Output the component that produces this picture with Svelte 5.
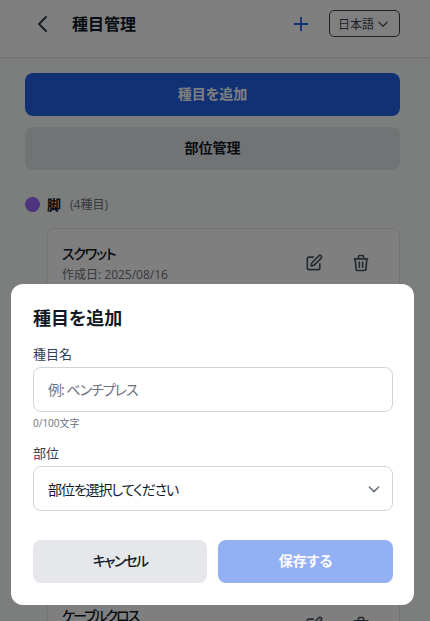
<script lang="ts">
	let name = $state('');
</script>

<div class="page">
	<header class="header">
		<div class="header__left">
			<button class="icon-btn back" aria-label="戻る">
				<svg width="24" height="24" viewBox="0 0 24 24" fill="none" stroke="currentColor" stroke-width="2" stroke-linecap="round" stroke-linejoin="round"><path d="M16 19l-7-7 7-7" /></svg>
			</button>
			<h1>種目管理</h1>
		</div>
		<div class="header__right">
			<button class="icon-btn plus" aria-label="追加">
				<svg width="22" height="22" viewBox="0 0 24 24" fill="none" stroke="currentColor" stroke-width="2" stroke-linecap="round" stroke-linejoin="round"><path d="M12 5v14M5 12h14" /></svg>
			</button>
			<div class="lang">
				<span>日本語</span>
				<svg width="14" height="14" viewBox="0 0 24 24" fill="none" stroke="currentColor" stroke-width="2" stroke-linecap="round" stroke-linejoin="round"><path d="M5 9l7 7 7-7" /></svg>
			</div>
		</div>
	</header>

	<main class="content">
		<button class="btn btn--primary">種目を追加</button>
		<button class="btn btn--secondary">部位管理</button>

		<section class="group">
			<div class="group__title">
				<span class="dot"></span>
				<h2>脚</h2>
				<span class="count">(4種目)</span>
			</div>
			<div class="card">
				<div class="card__text">
					<div class="card__name">スクワット</div>
					<div class="card__date">作成日: 2025/08/16</div>
				</div>
				<div class="card__actions">
					<svg width="20" height="20" viewBox="0 0 24 24" fill="none" stroke="currentColor" stroke-width="2" stroke-linecap="round" stroke-linejoin="round"><path d="M11 5H6a2 2 0 0 0-2 2v11a2 2 0 0 0 2 2h11a2 2 0 0 0 2-2v-5" /><path d="M17.6 3.6a2 2 0 1 1 2.8 2.8L12 14.8l-3.5.7.7-3.5 8.4-8.4z" /></svg>
					<svg width="20" height="20" viewBox="0 0 24 24" fill="none" stroke="currentColor" stroke-width="2" stroke-linecap="round" stroke-linejoin="round"><path d="M4 7h16M10 11v6M14 11v6M5 7l1 12a2 2 0 0 0 2 2h8a2 2 0 0 0 2-2l1-12M9 7V4a1 1 0 0 1 1-1h4a1 1 0 0 1 1 1v3" /></svg>
				</div>
			</div>
			<div class="card card--far">
				<div class="card__text">
					<div class="card__name card__name--long">ケーブルクロス</div>
					<div class="card__date">作成日: 2025/08/16</div>
				</div>
				<div class="card__actions">
					<svg width="20" height="20" viewBox="0 0 24 24" fill="none" stroke="currentColor" stroke-width="2" stroke-linecap="round" stroke-linejoin="round"><path d="M11 5H6a2 2 0 0 0-2 2v11a2 2 0 0 0 2 2h11a2 2 0 0 0 2-2v-5" /><path d="M17.6 3.6a2 2 0 1 1 2.8 2.8L12 14.8l-3.5.7.7-3.5 8.4-8.4z" /></svg>
					<svg width="20" height="20" viewBox="0 0 24 24" fill="none" stroke="currentColor" stroke-width="2" stroke-linecap="round" stroke-linejoin="round"><path d="M4 7h16M10 11v6M14 11v6M5 7l1 12a2 2 0 0 0 2 2h8a2 2 0 0 0 2-2l1-12M9 7V4a1 1 0 0 1 1-1h4a1 1 0 0 1 1 1v3" /></svg>
				</div>
			</div>
		</section>
	</main>

	<div class="overlay">
		<div class="modal">
			<h3>種目を追加</h3>
			<label class="label" for="name">種目名</label>
			<input id="name" class="field" placeholder="例: ベンチプレス" bind:value={name} />
			<p class="hint">{name.length}/100文字</p>
			<label class="label label--second" for="part">部位</label>
			<div class="field select" id="part">
				<span>部位を選択してください</span>
				<svg width="16" height="16" viewBox="0 0 24 24" fill="none" stroke="currentColor" stroke-width="2.4" stroke-linecap="round" stroke-linejoin="round"><path d="M5 9l7 7 7-7" /></svg>
			</div>
			<div class="modal__actions">
				<button class="btn btn--cancel">キャンセル</button>
				<button class="btn btn--save">保存する</button>
			</div>
		</div>
	</div>
</div>

<style>
	:global(body) {
		margin: 0;
		font-family: 'Open Sans', 'Noto Sans CJK JP', sans-serif;
		font-feature-settings: 'palt';
		color: #111827;
		background: #f9fafb;
	}

	.page {
		position: relative;
		width: 430px;
		height: 621px;
		overflow: hidden;
		background: #f9fafb;
	}

	button {
		font-family: inherit;
		font-feature-settings: inherit;
		border: none;
		background: none;
		padding: 0;
	}

	.header {
		display: flex;
		justify-content: space-between;
		align-items: center;
		height: 47px;
		padding: 0 30px 10px 30px;
		background: #fff;
		border-bottom: 1px solid #e5e7eb;
		box-shadow: 0 1px 2px rgba(0, 0, 0, 0.05);
	}

	.header__left,
	.header__right {
		display: flex;
		align-items: center;
	}

	.icon-btn {
		display: flex;
		color: #374151;
	}

	.plus {
		color: #2563eb;
		margin-right: 17px;
	}

	h1 {
		margin: 0 0 0 18px;
		font-size: 16px;
		font-weight: 700;
		line-height: 24px;
	}

	.lang {
		display: flex;
		align-items: center;
		gap: 2px;
		height: 27px;
		box-sizing: border-box;
		padding: 0 9px 0 8px;
		border: 1px solid #374151;
		border-radius: 5px;
		font-size: 12px;
		color: #374151;
	}

	.content {
		padding: 15px 30px 0 25px;
	}

	.btn {
		display: block;
		width: 100%;
		height: 43px;
		padding-bottom: 3px;
		border-radius: 8px;
		font-size: 14px;
		font-weight: 700;
	}

	.btn--primary {
		background: #2563eb;
		color: #fff;
		margin-bottom: 11px;
	}

	.btn--secondary {
		background: #e5e7eb;
		color: #111827;
	}

	.group {
		margin-top: 24px;
	}

	.group__title {
		display: flex;
		align-items: center;
		height: 20px;
		margin-bottom: 14px;
	}

	.dot {
		width: 15px;
		height: 15px;
		border-radius: 50%;
		background: #9a68ff;
		margin-right: 7px;
	}

	h2 {
		margin: 0 9px 0 0;
		font-size: 14px;
		font-weight: 700;
	}

	.count {
		font-size: 12px;
		color: #6b7280;
	}

	.card {
		display: flex;
		justify-content: space-between;
		align-items: center;
		height: 68px;
		margin-left: 22px;
		padding: 0 14px;
		background: #fff;
		border: 1px solid #e5e7eb;
		border-radius: 8px;
	}

	.card--far {
		margin-top: 292px;
	}

	.card__text {
		margin-top: 2px;
	}

	.card__name {
		font-size: 14px;
		font-weight: 500;
		line-height: 21px;
		letter-spacing: -1.2px;
	}

	.card__name--long {
		letter-spacing: -2px;
	}

	.card__date {
		font-size: 12px;
		line-height: 21px;
		color: #6b7280;
	}

	.card__actions {
		display: flex;
		gap: 27px;
		padding-right: 14px;
		color: #4b5563;
	}

	.overlay {
		position: absolute;
		inset: 0 5px 0 0;
		display: flex;
		align-items: flex-end;
		justify-content: center;
		padding-bottom: 16px;
		box-shadow: 5px 0 0 rgba(0, 0, 0, 0.5);
		background: rgba(0, 0, 0, 0.5);
	}

	.modal {
		box-sizing: border-box;
		width: 403px;
		height: 321px;
		padding: 22px 21px 22px 22px;
		background: #fff;
		border-radius: 12px;
	}

	h3 {
		margin: 0 0 14px;
		font-size: 18px;
		line-height: 24px;
		font-weight: 700;
		color: #111827;
	}

	.label {
		display: block;
		font-size: 13px;
		line-height: 20px;
		color: #374151;
		margin-bottom: 3px;
	}

	.label--second {
		margin-top: 13px;
	}

	.field {
		box-sizing: border-box;
		display: block;
		width: 100%;
		height: 45px;
		padding: 0 14px;
		font: inherit;
		font-feature-settings: inherit;
		font-size: 14px;
		color: #111827;
		background: #fff;
		border: 1px solid #d1d5db;
		border-radius: 8px;
		outline: none;
	}

	.field::placeholder {
		color: #6b7280;
		letter-spacing: -1px;
	}

	.hint {
		margin: 4px 0 0;
		font-size: 10px;
		line-height: 14px;
		color: #6b7280;
	}

	.select {
		display: flex;
		align-items: center;
		justify-content: space-between;
		padding-right: 10px;
		letter-spacing: -1.1px;
	}

	.select svg {
		color: #6b7280;
	}

	.modal__actions {
		display: flex;
		gap: 11px;
		margin-top: 29px;
	}

	.btn--cancel {
		flex: 0 0 174px;
		background: #e5e7eb;
		color: #111827;
		font-weight: 500;
		letter-spacing: -1.8px;
	}

	.btn--save {
		flex: 1;
		background: #93b0f5;
		color: #fff;
	}
</style>
